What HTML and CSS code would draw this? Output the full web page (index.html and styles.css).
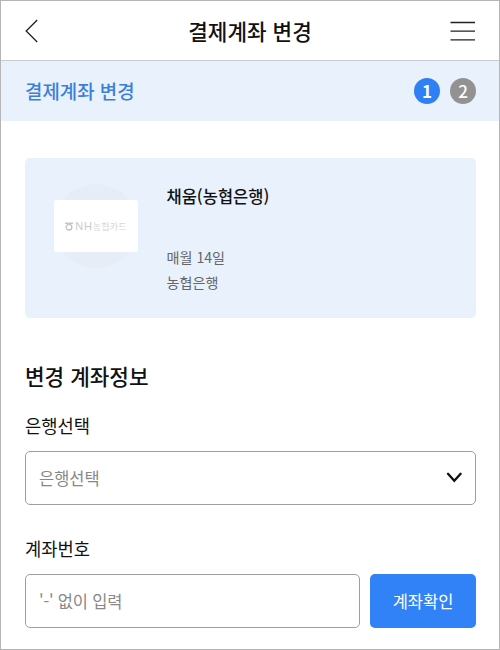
FILE: index.html
```html
<!doctype html>
<html lang="ko">
<head>
  <meta charset="utf-8">
  <meta name="viewport" content="width=device-width, initial-scale=1.0">
  <title>결제계좌 변경</title>
  <link rel="stylesheet" href="styles.css">
</head>
<body>
<div class="page">
  <header class="header">
    <button class="icon-button" type="button" aria-label="이전">
      <svg width="14" height="26" viewBox="0 0 14 26"><path d="M12.2 2 1.2 13l11 11"/></svg>
    </button>
    <h1>결제계좌 변경</h1>
    <button class="icon-button" type="button" aria-label="메뉴">
      <svg width="25" height="20" viewBox="0 0 25 20"><path d="M.5 1.5H25M.5 10.2H25M.5 18.9H25"/></svg>
    </button>
  </header>

  <div class="steps">
    <h2>결제계좌 변경</h2>
    <ol>
      <li class="current">1</li>
      <li>2</li>
    </ol>
  </div>

  <main>
    <section class="card">
      <div class="logo-circle">
        <div class="logo">
          <svg width="8" height="9" viewBox="0 0 8 9"><path d="M0 1.2h2.6M5.4 1.2H8M2.6.8 4 2 5.4.8"/><circle cx="4" cy="5.2" r="2.8"/></svg>
          <span class="nh">NH</span><span class="bank">농협카드</span>
        </div>
      </div>
      <div class="card-info">
        <h3>채움(농협은행)</h3>
        <p>매월 14일</p>
        <p>농협은행</p>
      </div>
    </section>

    <form class="account">
      <h2>변경 계좌정보</h2>
      <label id="bank-label">은행선택</label>
      <button class="select" type="button" aria-labelledby="bank-label">
        은행선택
        <svg width="16" height="11" viewBox="0 0 16 11"><path d="M2 1.8l6.3 7 6.3-7"/></svg>
      </button>
      <label for="number">계좌번호</label>
      <div class="row">
        <input id="number" type="text" placeholder="'-' 없이 입력">
        <button class="check" type="button">계좌확인</button>
      </div>
    </form>
  </main>
</div>
</body>
</html>
```
FILE: styles.css
```css
* {
  box-sizing: border-box;
}
body {
  margin: 0;
  background: #fff;
  color: #111;
}
body, button, input {
  font-family: "Noto Sans CJK KR", "Noto Sans", sans-serif;
}
h1, h2, h3, p, ol {
  margin: 0;
  padding: 0;
  font-weight: 500;
}
svg {
  display: block;
  fill: none;
}
.page {
  height: 650px;
  border: 1px solid #b5b5b5;
  overflow: hidden;
}

/* top bar */
.header {
  display: flex;
  align-items: center;
  justify-content: space-between;
  height: 60px;
  padding: 0 24px;
  border-bottom: 1px solid #c8cbcf;
}
.header h1 {
  margin-left: 11px;
  font-size: 21.3px;
  line-height: 30px;
}
.icon-button {
  padding: 0;
  border: 0;
  background: none;
}
.icon-button svg {
  stroke: #222;
  stroke-width: 1.3;
}

/* step indicator */
.steps {
  display: flex;
  align-items: center;
  justify-content: space-between;
  height: 60px;
  padding: 0 23px 0 24px;
  background: #e9f1fd;
}
.steps h2 {
  color: #3a80d8;
  font-size: 18.9px;
  line-height: 28px;
}
.steps ol {
  display: flex;
  gap: 10px;
  list-style: none;
}
.steps li {
  width: 26px;
  height: 26px;
  border-radius: 50%;
  background: #929292;
  color: #fff;
  font-size: 17px;
  line-height: 26px;
  text-align: center;
}
.steps .current {
  background: #2f7ff5;
  font-weight: 700;
}

main {
  padding: 37px 23px 0 24px;
}
.card {
  display: flex;
  height: 160px;
  padding: 26px 29px 25px;
  border-radius: 5px;
  background: #e9f1fd;
}
.logo-circle {
  display: flex;
  align-items: center;
  justify-content: center;
  width: 84px;
  height: 84px;
  border-radius: 50%;
  background: #e6edf7;
}
.logo {
  display: flex;
  flex: none;
  align-items: center;
  justify-content: center;
  width: 84px;
  height: 52px;
  border-radius: 2px;
  background: #fff;
  color: #cacaca;
  font-size: 9.2px;
  line-height: 12px;
}
.logo svg {
  margin-right: 2px;
  stroke: #c4c4c4;
  stroke-width: 1.4;
}
.logo .nh {
  font-family: "Liberation Sans", sans-serif;
  font-size: 11px;
  letter-spacing: .8px;
}
.logo .bank {
  color: #d8d8d8;
}
.card-info {
  margin-left: 28.5px;
}
.card-info h3 {
  margin-bottom: 36px;
  font-size: 16.5px;
  line-height: 25px;
}
.card-info p {
  color: #666;
  font-size: 14.1px;
  font-weight: 400;
  line-height: 24.5px;
}

/* account form */
.account h2 {
  margin: 42px 0 20px;
  font-size: 21.3px;
  line-height: 32px;
}
.account label {
  display: block;
  margin-bottom: 13px;
  font-size: 17.7px;
  line-height: 26px;
}
.select, input {
  height: 54px;
  padding: 0 13px;
  border: 1px solid #9e9e9e;
  border-radius: 5px;
  background: #fff;
  color: #888;
  font-size: 16.5px;
}
.select {
  display: flex;
  align-items: center;
  justify-content: space-between;
  width: 100%;
  margin-bottom: 30px;
  padding-bottom: 1px;
}
.select svg {
  stroke: #111;
  stroke-width: 2.3;
  stroke-linecap: round;
}
.row {
  display: flex;
  gap: 10px;
}
input {
  flex: 1;
  min-width: 0;
}
input::placeholder {
  color: #888;
  letter-spacing: -.2px;
}
.check {
  width: 106px;
  height: 54px;
  padding: 0;
  border: 0;
  border-radius: 5px;
  background: #3182f6;
  color: #fff;
  font-size: 16.5px;
}
```
